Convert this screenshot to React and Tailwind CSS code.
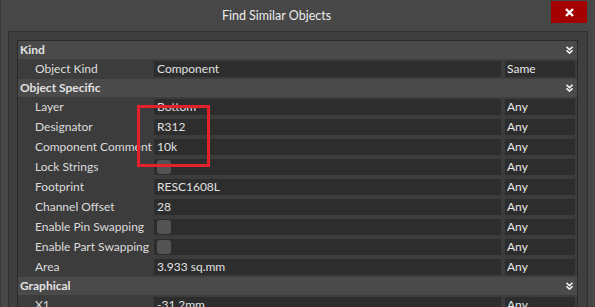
import React from "react";

const font = { fontFamily: 'Lato, "Noto Sans", "Liberation Sans", sans-serif' };

function Chev() {
  return (
    <svg width="7" height="8" viewBox="0 0 7 8" className="block">
      <path d="M0.5 0.8 L3.5 3.6 L6.5 0.8" stroke="#f0f0f0" strokeWidth="1.6" fill="none" />
      <path d="M0.5 4.3 L3.5 7.1 L6.5 4.3" stroke="#f0f0f0" strokeWidth="1.6" fill="none" />
    </svg>
  );
}

function Header({ title }) {
  return (
    <div className="h-[18px] bg-[#4a4a4a] flex items-center justify-between pl-[2px] pr-[4px]">
      <span className="text-[12px] font-bold text-[#e2e2e2] leading-none">{title}</span>
      <Chev />
    </div>
  );
}

function Row({ label, value, match, check }) {
  return (
    <div className="h-[20px] flex items-center bg-[#3c3c3c]">
      <div className="w-[136px] pl-[17px] text-[12px] text-[#dcdcdc] leading-none whitespace-nowrap">{label}</div>
      <div className="w-[347px] h-[16px] bg-[#2d2d2d] flex items-center pl-[3px] text-[12px] text-[#e0e0e0] leading-none">
        {check ? <div className="w-[14px] h-[14px] rounded-[3px] bg-[#535353]" /> : value}
      </div>
      <div className="w-[70px] h-[16px] ml-[4px] bg-[#2d2d2d] flex items-center pl-[2px] text-[12px] text-[#e8e8e8] leading-none">
        {match}
      </div>
    </div>
  );
}

export default function App() {
  return (
    <div style={font} className="relative w-[595px] h-[307px] overflow-hidden bg-[#474747] border-l border-[#3a3a3a]">
      <div className="h-[31px] w-[551px] flex items-center justify-center text-[12.5px] text-[#ececec]">
        <span className="mt-[2px]">Find Similar Objects</span>
      </div>
      <div className="absolute top-[1px] right-[8px] w-[36px] h-[22px] bg-[#a40000] flex items-center justify-center">
        <svg width="9" height="9" viewBox="0 0 9 9">
          <path d="M1 1 L8 8 M8 1 L1 8" stroke="#ffffff" strokeWidth="2.4" />
        </svg>
      </div>
      <div className="ml-[7px] mr-[7px] border border-[#2f2f2f] bg-[#3f3f3f] pt-[8px] pl-[8px] pr-[9px] h-[300px]">
        <div className="border border-[#2a2a2a] bg-[#3c3c3c]">
          <Header title="Kind" />
          <Row label="Object Kind" value="Component" match="Same" />
          <Header title="Object Specific" />
          <Row label="Layer" value="Bottom" match="Any" />
          <Row label="Designator" value="R312" match="Any" />
          <Row label="Component Comment" value="10k" match="Any" />
          <Row label="Lock Strings" check match="Any" />
          <Row label="Footprint" value="RESC1608L" match="Any" />
          <Row label="Channel Offset" value="28" match="Any" />
          <Row label="Enable Pin Swapping" check match="Any" />
          <Row label="Enable Part Swapping" check match="Any" />
          <Row label="Area" value="3.933 sq.mm" match="Any" />
          <Header title="Graphical" />
          <Row label="X1" value="-31.2mm" match="Any" />
        </div>
      </div>
      <div className="absolute left-[136px] top-[105px] w-[73px] h-[62px] border-[3px] border-[#e3212b]" />
    </div>
  );
}
